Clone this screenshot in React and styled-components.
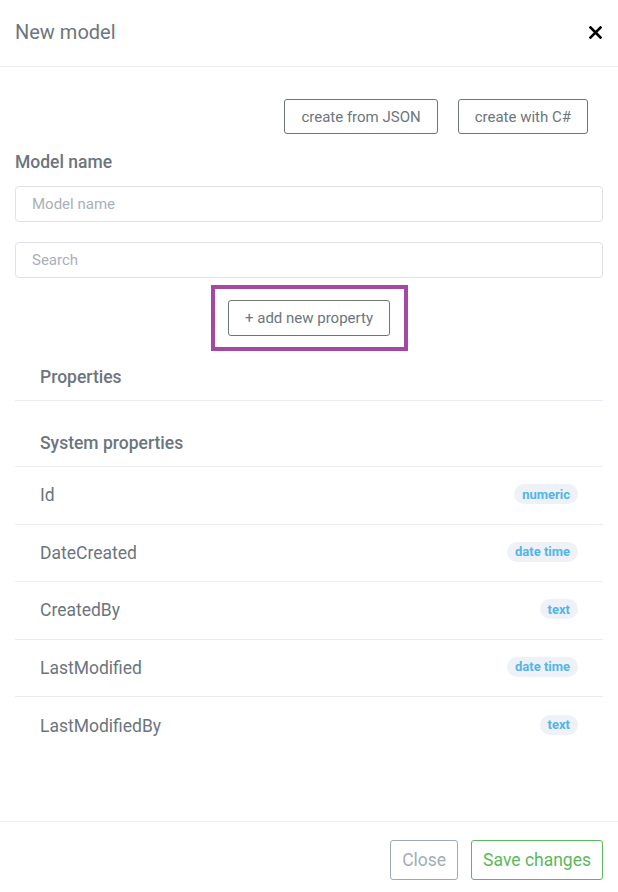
import React from "react";
import styled, { createGlobalStyle } from "styled-components";

const Global = createGlobalStyle`
  html, body { margin: 0; padding: 0; background: #fff; }
  body { font-family: Roboto, "Liberation Sans", sans-serif; }
  * { box-sizing: border-box; }
`;

const Modal = styled.div`
  width: 618px;
  height: 892px;
  display: flex;
  flex-direction: column;
  background: #fff;
`;

const Header = styled.div`
  height: 67px;
  border-bottom: 1px solid #ebedf2;
  display: flex;
  align-items: center;
  justify-content: space-between;
  padding: 0 15px 2px 15px;
`;

const Title = styled.h5`
  margin: 0;
  font-size: 20px;
  font-weight: 400;
  color: #6c757d;
`;

const CloseX = styled.button`
  border: none;
  background: none;
  padding: 0;
  width: 16px;
  height: 16px;
  display: flex;
  align-items: center;
  justify-content: center;
  cursor: pointer;
`;

const Body = styled.div`
  flex: 1;
  padding: 32px 15px 0 15px;
  display: flex;
  flex-direction: column;
`;

const TopActions = styled.div`
  display: flex;
  justify-content: flex-end;
  gap: 20px;
  padding-right: 15px;
`;

const OutlineButton = styled.button`
  height: 35px;
  padding: 0 16px;
  background: #fff;
  border: 1px solid #6c757d;
  border-radius: 3px;
  font-family: Roboto, "Liberation Sans", sans-serif;
  font-size: 15px;
  color: #6c757d;
  cursor: pointer;
`;

const Label = styled.div`
  margin-top: 17px;
  font-size: 17.5px;
  font-weight: 500;
  color: #6c757d;
  line-height: 22px;
`;

const Input = styled.input`
  display: block;
  width: 100%;
  height: 36px;
  margin-top: ${(p) => p.$mt}px;
  padding: 0 16px;
  border: 1px solid #dfe1e6;
  border-radius: 4px;
  font-family: Roboto, "Liberation Sans", sans-serif;
  font-size: 15px;
  color: #495057;
  outline: none;
  &::placeholder { color: #a9b0b8; }
`;

const HighlightRow = styled.div`
  display: flex;
  justify-content: center;
  margin-top: 7px;
`;

const Highlight = styled.div`
  width: 197px;
  height: 66px;
  border: 4px solid #a349a4;
  display: flex;
  align-items: center;
  justify-content: center;
`;

const SmallButton = styled(OutlineButton)`
  height: 36px;
  width: 162px;
  padding: 0;
`;

const List = styled.div`
  width: 588px;
`;

const SectionHead = styled.div`
  height: ${(p) => p.$h}px;
  display: flex;
  align-items: flex-end;
  padding: 0 0 ${(p) => p.$pb}px 25px;
  border-bottom: 1px solid #ebedf2;
  font-size: 17.5px;
  font-weight: 500;
  color: #6c757d;
`;

const Row = styled.div`
  height: ${(p) => (p.$last ? 57 : 57.5)}px;
  display: flex;
  align-items: center;
  justify-content: space-between;
  padding: 0 25px 0 25px;
  border-bottom: ${(p) => (p.$last ? "none" : "1px solid #ebedf2")};
  font-size: 17.5px;
  color: #6c757d;
`;

const Badge = styled.span`
  display: inline-flex;
  align-items: center;
  height: 20px;
  padding: 0 8px;
  border-radius: 10px;
  background: #eef1f6;
  color: #52b6e6;
  font-size: 13px;
  font-weight: 700;
  margin-top: -2px;
`;

const Footer = styled.div`
  height: 71px;
  border-top: 1px solid #ebedf2;
  display: flex;
  justify-content: flex-end;
  align-items: flex-start;
  gap: 13px;
  padding: 18px 15px 0 15px;
`;

const FooterButton = styled.button`
  height: 40px;
  padding: 0 11px;
  background: #fff;
  border: 1px solid ${(p) => (p.$green ? "#5cb85c" : "#9ea9b3")};
  color: ${(p) => (p.$green ? "#5cb85c" : "#a3adb6")};
  border-radius: 3px;
  font-family: Roboto, "Liberation Sans", sans-serif;
  font-size: 17.5px;
  cursor: pointer;
`;

const rows = [
  ["Id", "numeric"],
  ["DateCreated", "date time"],
  ["CreatedBy", "text"],
  ["LastModified", "date time"],
  ["LastModifiedBy", "text"],
];

export default function App() {
  return (
    <>
      <Global />
      <Modal>
        <Header>
          <Title>New model</Title>
          <CloseX aria-label="close">
            <svg width="13" height="13" viewBox="0 0 13 13">
              <path d="M1.5 1.5 L11.5 11.5 M11.5 1.5 L1.5 11.5" stroke="#000" strokeWidth="2.6" strokeLinecap="square" />
            </svg>
          </CloseX>
        </Header>
        <Body>
          <TopActions>
            <OutlineButton>create from JSON</OutlineButton>
            <OutlineButton>create with C#</OutlineButton>
          </TopActions>
          <Label>Model name</Label>
          <Input $mt={13} placeholder="Model name" />
          <Input $mt={20} placeholder="Search" />
          <HighlightRow>
            <Highlight>
              <SmallButton>+ add new property</SmallButton>
            </Highlight>
          </HighlightRow>
          <List>
            <SectionHead $h={50} $pb={13}>Properties</SectionHead>
            <SectionHead $h={66} $pb={13}>System properties</SectionHead>
            {rows.map(([name, type], i) => (
              <Row key={name} $last={i === rows.length - 1}>
                <span>{name}</span>
                <Badge>{type}</Badge>
              </Row>
            ))}
          </List>
        </Body>
        <Footer>
          <FooterButton>Close</FooterButton>
          <FooterButton $green>Save changes</FooterButton>
        </Footer>
      </Modal>
    </>
  );
}
